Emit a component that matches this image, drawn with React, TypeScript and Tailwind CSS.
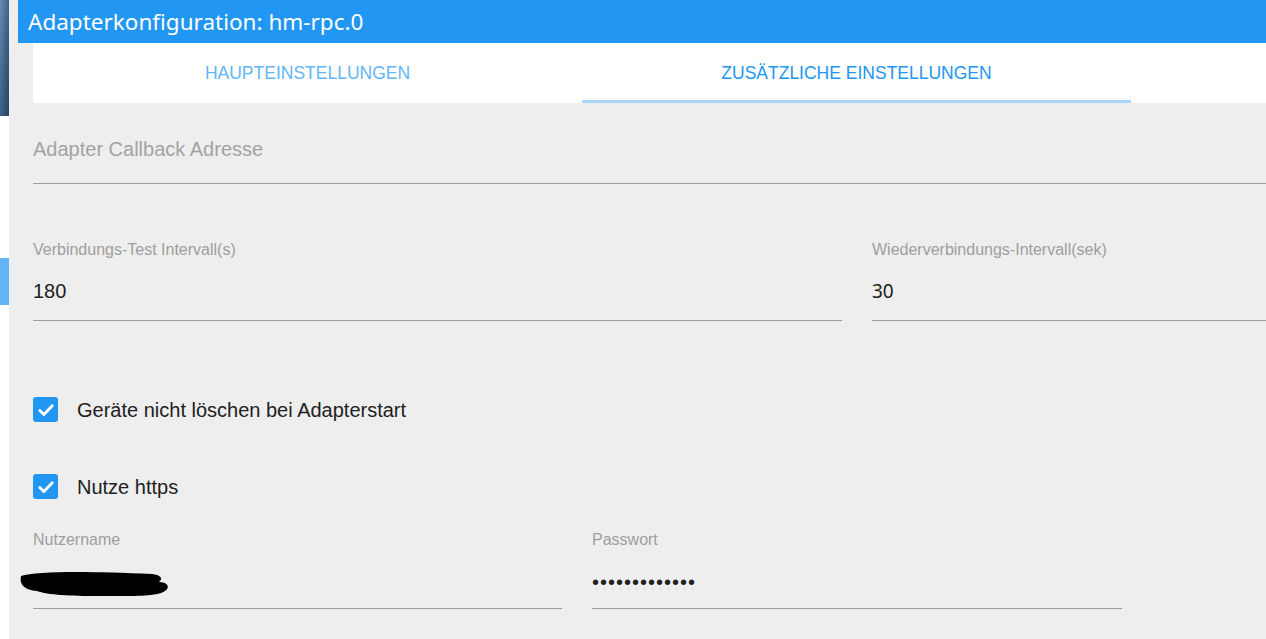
import React from "react"

function Check() {
  return (
    <div className="flex h-[25px] w-[25px] items-center justify-center rounded-[3px] bg-[#2196f3]">
      <svg width="20" height="20" viewBox="0 0 24 24" fill="none">
        <path d="M4.5 12.5l5 5L19.5 7" stroke="white" strokeWidth="3.4" strokeLinecap="round" strokeLinejoin="round" />
      </svg>
    </div>
  )
}

function Field({ label, value, className }: { label: string; value: React.ReactNode; className?: string }) {
  return (
    <div className={`border-b border-[#9e9e9e] ${className ?? ""}`}>
      <div className="text-[16px] leading-[18px] text-[#9e9e9e]">{label}</div>
      {value}
    </div>
  )
}

export default function App() {
  return (
    <div className="flex h-[639px] w-[1266px] overflow-hidden bg-[#eeeeee] font-['Liberation_Sans',Arial,sans-serif]">
      {/* left edge of the window behind */}
      <div className="flex w-[9px] shrink-0 flex-col bg-white">
        <div className="h-[116px] bg-gradient-to-br from-[#6a8fb2] via-[#3f6488] to-[#27425f]" />
        <div className="mt-[142px] h-[47px] bg-[#64b5f6]" />
      </div>

      <div className="flex min-w-0 flex-1 flex-col">
        {/* Title bar */}
        <div className="ml-[9px] flex h-[43px] items-center bg-[#2196f3] pl-[10px] font-['Noto_Sans',sans-serif] text-[22.5px] text-white">
          Adapterkonfiguration: hm-rpc.0
        </div>

        {/* Tabs */}
        <div className="ml-[24px] flex h-[60px] bg-white">
          <div className="flex w-[549px] items-center justify-center text-[17.5px] text-[#64b5f6]">
            HAUPTEINSTELLUNGEN
          </div>
          <div className="relative flex w-[549px] items-center justify-center text-[17.5px] text-[#2196f3]">
            ZUSÄTZLICHE EINSTELLUNGEN
            <div className="absolute bottom-0 left-0 h-[3px] w-full bg-[#a8d6fa]" />
          </div>
        </div>

        {/* Form */}
        <div className="pl-[24px]">
          <div className="border-b border-[#9e9e9e] pt-[34px] pb-[22px] text-[20px] leading-[24px] text-[#a3a3a3]">
            Adapter Callback Adresse
          </div>

          <div className="mt-[57px] flex gap-[30px]">
            <Field
              className="w-[809px] pb-[17px]"
              label="Verbindungs-Test Intervall(s)"
              value={<div className="mt-[20px] text-[20px] leading-[24px] text-[#212121]">180</div>}
            />
            <Field
              className="flex-1 pb-[17px]"
              label="Wiederverbindungs-Intervall(sek)"
              value={<div className="mt-[20px] font-['Noto_Sans',sans-serif] text-[19px] leading-[24px] text-[#212121]">30</div>}
            />
          </div>

          <div className="mt-[76px] flex items-center gap-[19px]">
            <Check />
            <span className="text-[20px] leading-[24px] text-[#212121]">Geräte nicht löschen bei Adapterstart</span>
          </div>
          <div className="mt-[52px] flex items-center gap-[19px]">
            <Check />
            <span className="text-[20px] leading-[24px] text-[#212121]">Nutze https</span>
          </div>

          <div className="mt-[32px] flex gap-[30px]">
            <Field
              className="w-[529px] pb-[14px]"
              label="Nutzername"
              value={
                <div className="mt-[21px] -ml-[16px] h-[24px]">
                  <svg width="154" height="28" viewBox="0 0 154 28" className="mt-[1px]">
                    <path
                      d="M4 6 C 20 1, 70 1, 135 4 C 143 5, 147 8, 142 12 C 150 12, 154 17, 148 21 C 140 27, 110 26, 80 26 C 55 26, 30 25, 20 21 C 8 20, 2 15, 4 6 Z"
                      fill="black"
                    />
                  </svg>
                </div>
              }
            />
            <Field
              className="w-[530px] pb-[14px]"
              label="Passwort"
              value={
                <div className="mt-[21px] text-[20px] leading-[24px] tracking-[1px] text-[#212121]">
                  •••••••••••••
                </div>
              }
            />
          </div>
        </div>
      </div>
    </div>
  )
}
